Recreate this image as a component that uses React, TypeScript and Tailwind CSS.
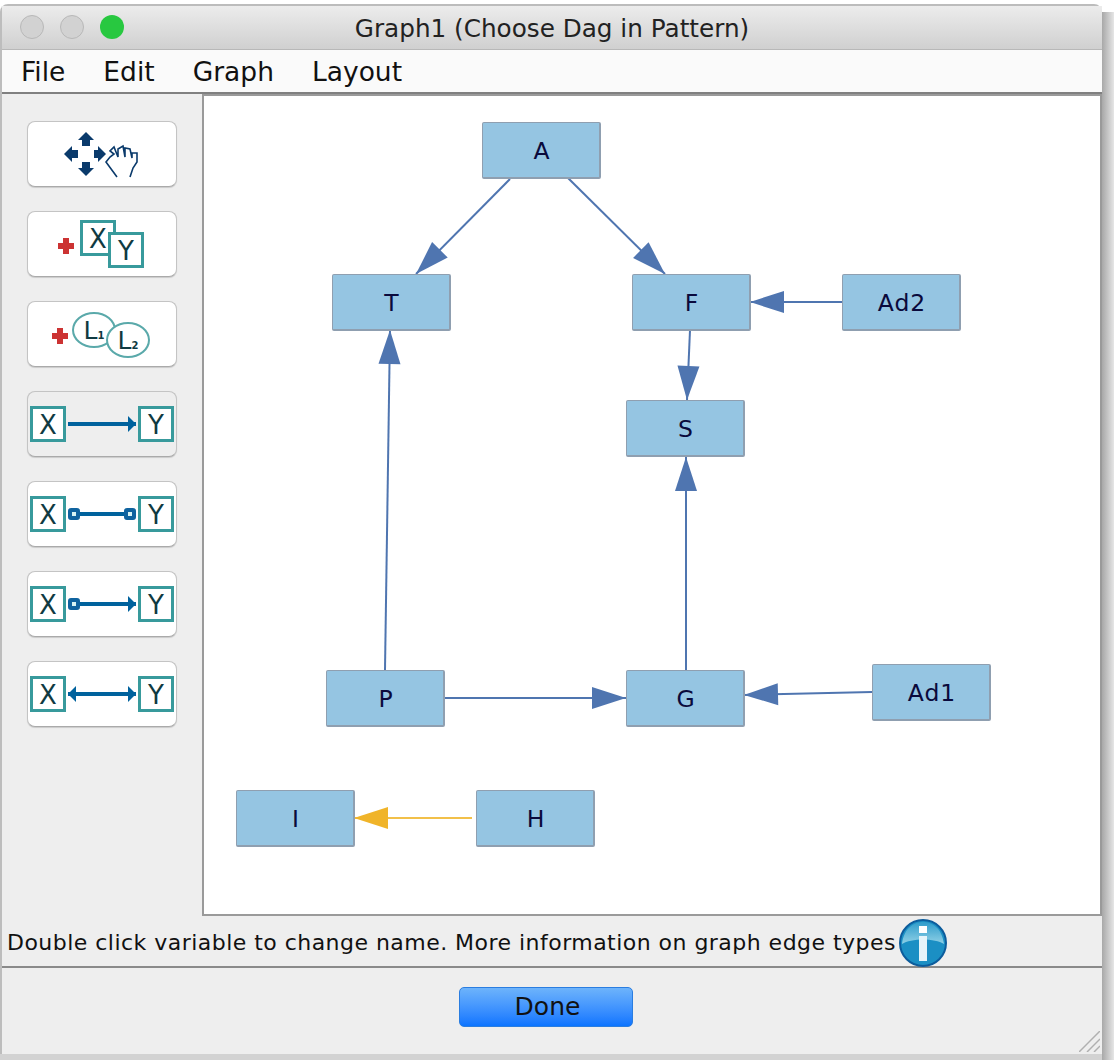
const font = "font-['DejaVu_Sans','Liberation_Sans',sans-serif]";

const nodes = [
  { label: "A", x: 482, y: 122 },
  { label: "T", x: 332, y: 274 },
  { label: "F", x: 632, y: 274 },
  { label: "Ad2", x: 842, y: 274 },
  { label: "S", x: 626, y: 400 },
  { label: "P", x: 326, y: 670 },
  { label: "G", x: 626, y: 670 },
  { label: "Ad1", x: 872, y: 664 },
  { label: "I", x: 236, y: 790 },
  { label: "H", x: 476, y: 790 },
];

// x1,y1 -> x2,y2 in window coordinates, the head ends at x2,y2
const edges = [
  { x1: 510, y1: 179, x2: 416, y2: 274 },
  { x1: 568, y1: 178, x2: 665, y2: 274 },
  { x1: 842, y1: 302, x2: 750, y2: 302 },
  { x1: 690, y1: 330, x2: 687, y2: 400 },
  { x1: 385, y1: 670, x2: 390, y2: 330 },
  { x1: 686, y1: 670, x2: 686, y2: 457 },
  { x1: 444, y1: 698, x2: 626, y2: 698 },
  { x1: 872, y1: 692, x2: 744, y2: 695 },
  { x1: 472, y1: 818, x2: 354, y2: 818, color: "#f0b429", line: "#f2c04a" },
];

function Head({ x1, y1, x2, y2, color }: { x1: number; y1: number; x2: number; y2: number; color: string }) {
  const len = Math.hypot(x2 - x1, y2 - y1);
  const ux = (x2 - x1) / len;
  const uy = (y2 - y1) / len;
  const bx = x2 - ux * 34;
  const by = y2 - uy * 34;
  const w = 11;
  return (
    <polygon
      points={`${x2},${y2} ${bx - uy * w},${by + ux * w} ${bx + uy * w},${by - ux * w}`}
      fill={color}
    />
  );
}

function GraphEdges() {
  return (
    <svg className="absolute left-[-204px] top-[-96px]" width="1114" height="1060">
      {edges.map((e, i) => {
        const color = e.color ?? "#4f75b0";
        return (
          <g key={i}>
            <line x1={e.x1} y1={e.y1} x2={e.x2} y2={e.y2} stroke={e.line ?? color} strokeWidth="2" />
            <Head x1={e.x1} y1={e.y1} x2={e.x2} y2={e.y2} color={color} />
          </g>
        );
      })}
    </svg>
  );
}

function Box({ t, className }: { t: string; className: string }) {
  return (
    <span className={`absolute flex h-[36px] w-[36px] items-center justify-center border-[3px] border-[#389a9c] bg-white pt-[1px] text-[26px] leading-none text-[#0f3a42] ${className}`}>
      {t}
    </span>
  );
}

function Dot({ className }: { className: string }) {
  return <span className={`absolute top-[26px] h-[12px] w-[12px] rounded-[3px] border-[4px] border-[#0f639f] bg-[#d8f4f4] ${className}`} />;
}

function EdgeIcon({ start, end }: { start: "none" | "dot" | "arrow"; end: "dot" | "arrow" }) {
  return (
    <>
      <Box t="X" className="left-[2px] top-[14px]" />
      <Box t="Y" className="left-[110px] top-[14px]" />
      <span className="absolute left-[40px] top-[30px] h-[4px] w-[68px] bg-[#00629d]" />
      {start === "dot" && <Dot className="left-[40px]" />}
      {end === "dot" && <Dot className="left-[96px]" />}
      {start === "arrow" && (
        <svg className="absolute left-[40px] top-[24px]" width="8" height="16">
          <polygon points="0,8 8,0 8,16" fill="#00629d" />
        </svg>
      )}
      {end === "arrow" && (
        <svg className="absolute left-[100px] top-[24px]" width="8" height="16">
          <polygon points="8,8 0,0 0,16" fill="#00629d" />
        </svg>
      )}
    </>
  );
}

function MoveIcon() {
  return (
    <svg width="148" height="64" viewBox="0 0 148 64" className="absolute left-0 top-0">
      <g fill="#0a3a6b">
        <polygon points="58,10 66,18 62,18 62,24 54,24 54,18 50,18" />
        <polygon points="58,54 66,46 62,46 62,40 54,40 54,46 50,46" />
        <polygon points="36,32 44,24 44,28 50,28 50,36 44,36 44,40" />
        <polygon points="78,32 70,24 70,28 66,28 66,36 70,36 70,40" />
      </g>
      <path
        d="M89 55 L78 40 L82 35 L86 32 L82 29 L86 25 L90 35 L90 27 L95 24 L97 35 L97 26 L102 27 L104 36 L104 31 L109 31 L109 40 L105 46 L102 55"
        fill="none"
        stroke="#0a3a6b"
        strokeWidth="1.6"
      />
    </svg>
  );
}

function PlusMark({ className }: { className: string }) {
  return (
    <span className={`absolute h-[16px] w-[16px] ${className}`}>
      <span className="absolute left-[5px] top-0 h-[16px] w-[6px] bg-[#cc3333]" />
      <span className="absolute left-0 top-[5px] h-[6px] w-[16px] bg-[#cc3333]" />
    </span>
  );
}

function Latent({ n, className }: { n: string; className: string }) {
  return (
    <span className={`absolute flex h-[36px] w-[44px] items-center justify-center rounded-[50%] border-2 border-[#5aa9aa] bg-white text-[25px] leading-none text-[#0f3a42] ${className}`}>
      L<span className="mt-[12px] text-[10px] font-bold">{n}</span>
    </span>
  );
}

function Tool({ active, children }: { active?: boolean; children: React.ReactNode }) {
  return (
    <div className={`relative h-[66px] w-[150px] rounded-[8px] border border-[#c4c4c4] border-b-[#aaaaaa] shadow-[0_1px_1px_rgba(0,0,0,0.15)] ${active ? "bg-[#eeeeee]" : "bg-white"}`}>
      {children}
    </div>
  );
}

function Toolbar() {
  return (
    <div className="flex w-[200px] shrink-0 flex-col gap-[24px] pl-[25px] pt-[27px]">
      <Tool>
        <MoveIcon />
      </Tool>
      <Tool>
        <PlusMark className="left-[30px] top-[26px]" />
        <Box t="X" className="left-[52px] top-[8px]" />
        <Box t="Y" className="left-[80px] top-[20px]" />
      </Tool>
      <Tool>
        <PlusMark className="left-[24px] top-[26px]" />
        <Latent n="1" className="left-[44px] top-[10px]" />
        <Latent n="2" className="left-[78px] top-[20px]" />
      </Tool>
      <Tool active>
        <EdgeIcon start="none" end="arrow" />
      </Tool>
      <Tool>
        <EdgeIcon start="dot" end="dot" />
      </Tool>
      <Tool>
        <EdgeIcon start="dot" end="arrow" />
      </Tool>
      <Tool>
        <EdgeIcon start="arrow" end="arrow" />
      </Tool>
    </div>
  );
}

function GraphCanvas() {
  return (
    <div className="relative h-[822px] w-[900px] shrink-0 border-2 border-[#9a9a9a] bg-white">
      <div className="absolute left-0 top-0 h-full w-full overflow-hidden">
        <GraphEdges />
      </div>
      {nodes.map((n) => (
        <div
          key={n.label}
          className="absolute flex h-[57px] w-[119px] items-center justify-center rounded-[2px] border border-r-2 border-b-2 border-[#8f9fb0] bg-[#95c5e2] pl-[2px] pt-[3px] text-[23.5px] tracking-[1px] text-[#0a0a3c]"
          style={{ left: n.x - 204, top: n.y - 96 }}
        >
          {n.label}
        </div>
      ))}
    </div>
  );
}

function InfoIcon() {
  return (
    <span className="relative ml-[3px] block h-[48px] w-[48px] shrink-0">
      <svg width="48" height="48" viewBox="0 0 48 48" className="absolute left-0 top-0">
        <defs>
          <linearGradient id="infoTop" x1="0" y1="0" x2="0" y2="1">
            <stop offset="0" stopColor="#2f9ccb" />
            <stop offset="1" stopColor="#8fd0e6" />
          </linearGradient>
        </defs>
        <circle cx="24" cy="24" r="23" fill="#1b8fc4" stroke="#0c5c9c" strokeWidth="2" />
        <path d="M3 25 C5 8 16 3 24 3 C32 3 43 8 45 25 C36 19 12 19 3 25Z" fill="url(#infoTop)" />
        <rect x="20" y="7" width="8" height="7" fill="#ffffff" />
        <rect x="20" y="17" width="8" height="25" fill="#e4f4fa" />
      </svg>
    </span>
  );
}

function Grip() {
  return (
    <svg className="absolute bottom-[2px] right-[2px]" width="21" height="21">
      <g stroke="#b0b0b0" strokeWidth="1.5">
        <line x1="0" y1="21" x2="21" y2="0" />
        <line x1="8" y1="21" x2="21" y2="8" />
        <line x1="15" y1="21" x2="21" y2="15" />
      </g>
    </svg>
  );
}

export default function App() {
  return (
    <div className={`flex h-[1060px] w-[1114px] overflow-hidden bg-white ${font}`}>
      <div className="flex w-[1102px] shrink-0 flex-col pt-[4px]">
        <div className="flex min-h-0 flex-1 flex-col rounded-t-[8px] border-l-2 border-t-2 border-l-[#bdbdbd] border-t-[#bcbcbc] bg-[#eeeeee]">
          <div className="relative flex h-[44px] shrink-0 items-center justify-center border-b border-[#b8b8b8] bg-gradient-to-b from-[#ececec] to-[#d0d0d0] pt-[2px] text-[24.7px] text-[#222222]">
            <div className="absolute left-[18px] top-[9px] flex gap-[16px]">
              <span className="h-[24px] w-[24px] rounded-full border border-[#b8b8b8] bg-[#d2d2d2]" />
              <span className="h-[24px] w-[24px] rounded-full border border-[#b8b8b8] bg-[#d2d2d2]" />
              <span className="h-[24px] w-[24px] rounded-full bg-[#28c840]" />
            </div>
            <span>Graph1 (Choose Dag in Pattern)</span>
          </div>
          <div className="flex h-[44px] shrink-0 items-center gap-[38px] border-b-2 border-[#808080] bg-[#fafafa] pl-[19px] pt-[2px] text-[26.5px] text-[#111111]">
            <span>File</span>
            <span>Edit</span>
            <span>Graph</span>
            <span>Layout</span>
          </div>
          <div className="flex shrink-0">
            <Toolbar />
            <GraphCanvas />
          </div>
          <div className="flex h-[52px] shrink-0 items-center border-b-2 border-[#8a8a8a] pl-[5px] pt-[3px] text-[22px] tracking-[0.47px] text-[#111111]">
            <span>Double click variable to change name. More information on graph edge types</span>
            <InfoIcon />
          </div>
          <div className="relative flex flex-1 items-start justify-center pr-[12px] pt-[19px]">
            <button className="h-[40px] w-[174px] rounded-[5px] border border-[#2a7de0] bg-gradient-to-b from-[#6db3fb] to-[#0a74ff] pl-[3px] text-[25px] text-[#111111]">
              Done
            </button>
            <Grip />
          </div>
        </div>
        <div className="h-[6px] shrink-0 bg-[#d2d2d2]" />
      </div>
      <div className="mt-[12px] w-[12px] shrink-0 bg-gradient-to-r from-[#a8a8a8] to-[#e6e6e6]" />
    </div>
  );
}
